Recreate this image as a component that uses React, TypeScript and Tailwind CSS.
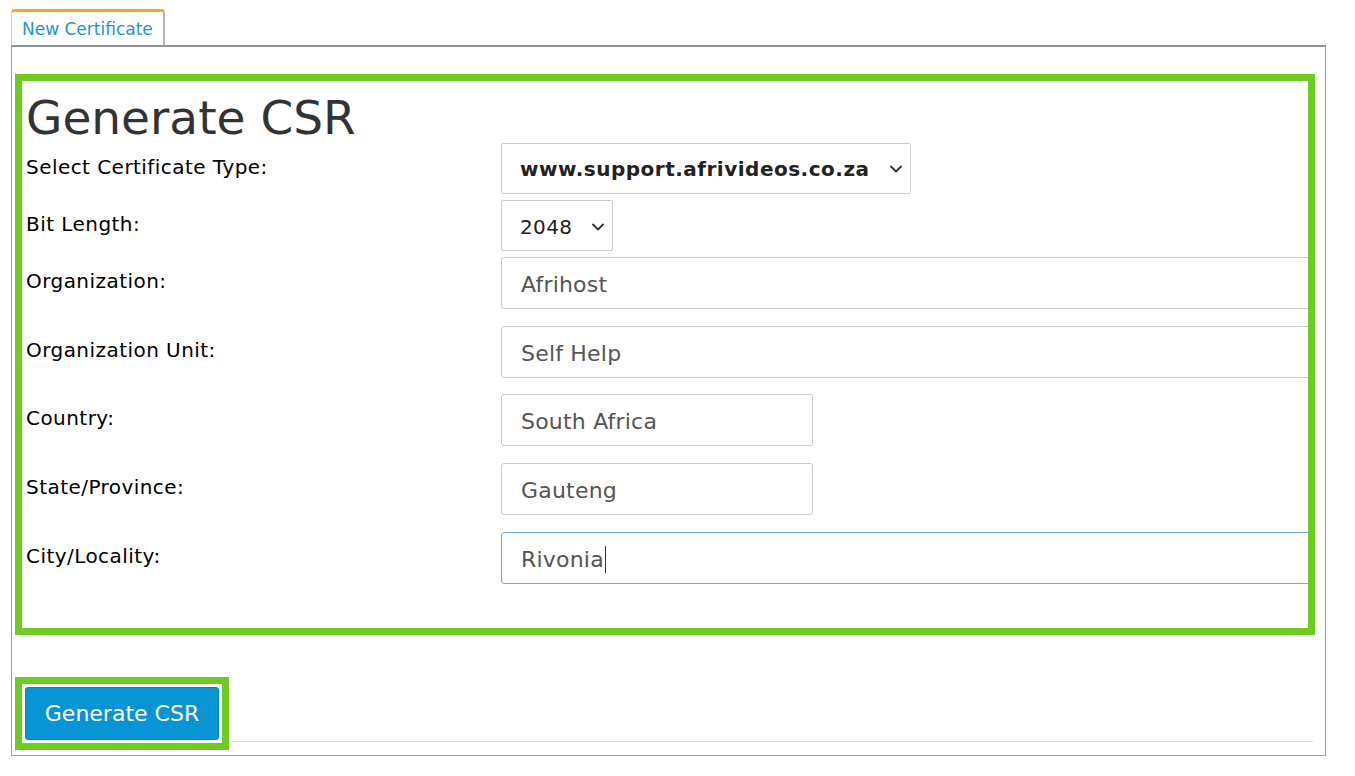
import type { ReactNode } from 'react'

const CHEVRON = (
  <svg width="12" height="8" viewBox="0 0 12 8" fill="none" className="shrink-0">
    <path d="M1 1.5L6 6.5L11 1.5" stroke="#333" strokeWidth="1.8" strokeLinecap="round" strokeLinejoin="round" />
  </svg>
)

function Row({ label, height, children }: { label: string; height: string; children: ReactNode }) {
  return (
    <div className={`flex items-start ${height}`}>
      <div className="w-[475px] shrink-0 pt-[12px] text-[20px] leading-[24px] tracking-[0.45px] text-black">{label}</div>
      {children}
    </div>
  )
}

function TextBox({ value, width, focused }: { value: string; width: string; focused?: boolean }) {
  return (
    <div
      className={`flex h-[52px] shrink-0 items-center rounded-[3px] border bg-white pl-[19px] pt-[2px] text-[22px] tracking-[0.2px] text-[#555] ${width} ${
        focused ? 'border-[#66afe9]' : 'border-[#ccc]'
      }`}
    >
      {value}
      {focused && <span className="ml-[1px] inline-block h-[27px] w-[1px] bg-[#333]" />}
    </div>
  )
}

export default function App() {
  return (
    <div className="min-h-[776px] bg-white pt-[9px] font-['DejaVu_Sans',sans-serif]">
      {/* tab */}
      <div className="ml-[11px] flex h-[36px] w-[154px] items-center rounded-t-[4px] border-t-[3px] border-r-[2px] border-l border-t-[#f2a52a] border-r-[#b5b5b5] border-l-[#cfcfcf] bg-white pl-[10px] pt-[3px] text-[17px] text-[#1f93d8]">
        New Certificate
      </div>

      {/* panel */}
      <div className="ml-[11px] w-[1315px] border border-t-[2px] border-[#a0a0a0] border-t-[#8f9699] pb-[13px]">
        <div className="ml-[3px] mr-[10px] mt-[27px] h-[561px] overflow-hidden border-[7px] border-[#6fca21] pl-[4px]">
          <h1 className="h-[62px] pt-[11px] text-[47px] leading-[51px] font-normal text-[#333]">Generate CSR</h1>

          <Row label="Select Certificate Type:" height="h-[57px]">
            <div className="flex h-[51px] w-[410px] shrink-0 items-center justify-between rounded-[2px] border border-[#ccc] pl-[18px] pr-[8px] pt-[1px] text-[20px] font-bold tracking-[0.5px] text-[#222]">
              www.support.afrivideos.co.za
              {CHEVRON}
            </div>
          </Row>

          <Row label="Bit Length:" height="h-[57px]">
            <div className="flex h-[51px] w-[112px] shrink-0 items-center justify-between rounded-[2px] border border-[#ccc] pl-[18px] pr-[8px] pt-[2px] text-[20px] tracking-[0.4px] text-[#222]">
              2048
              {CHEVRON}
            </div>
          </Row>

          <Row label="Organization:" height="h-[69px]">
            <TextBox value="Afrihost" width="w-[860px]" />
          </Row>
          <Row label="Organization Unit:" height="h-[68px]">
            <TextBox value="Self Help" width="w-[860px]" />
          </Row>
          <Row label="Country:" height="h-[69px]">
            <TextBox value="South Africa" width="w-[312px]" />
          </Row>
          <Row label="State/Province:" height="h-[69px]">
            <TextBox value="Gauteng" width="w-[312px]" />
          </Row>
          <Row label="City/Locality:" height="h-[69px]">
            <TextBox value="Rivonia" width="w-[860px]" focused />
          </Row>
        </div>

        <div className="ml-[3px] mr-[12px] mt-[42px] h-[65px] border-b border-[#ddd]">
          <div className="relative z-10 inline-block border-[7px] border-[#6fca21] bg-white p-[3px]">
            <button
              type="button"
              className="flex h-[53px] w-[194px] items-center justify-center rounded-[3px] border border-[#0784c2] bg-[#0795d6] text-[22px] text-white"
            >
              Generate CSR
            </button>
          </div>
        </div>
      </div>
    </div>
  )
}
